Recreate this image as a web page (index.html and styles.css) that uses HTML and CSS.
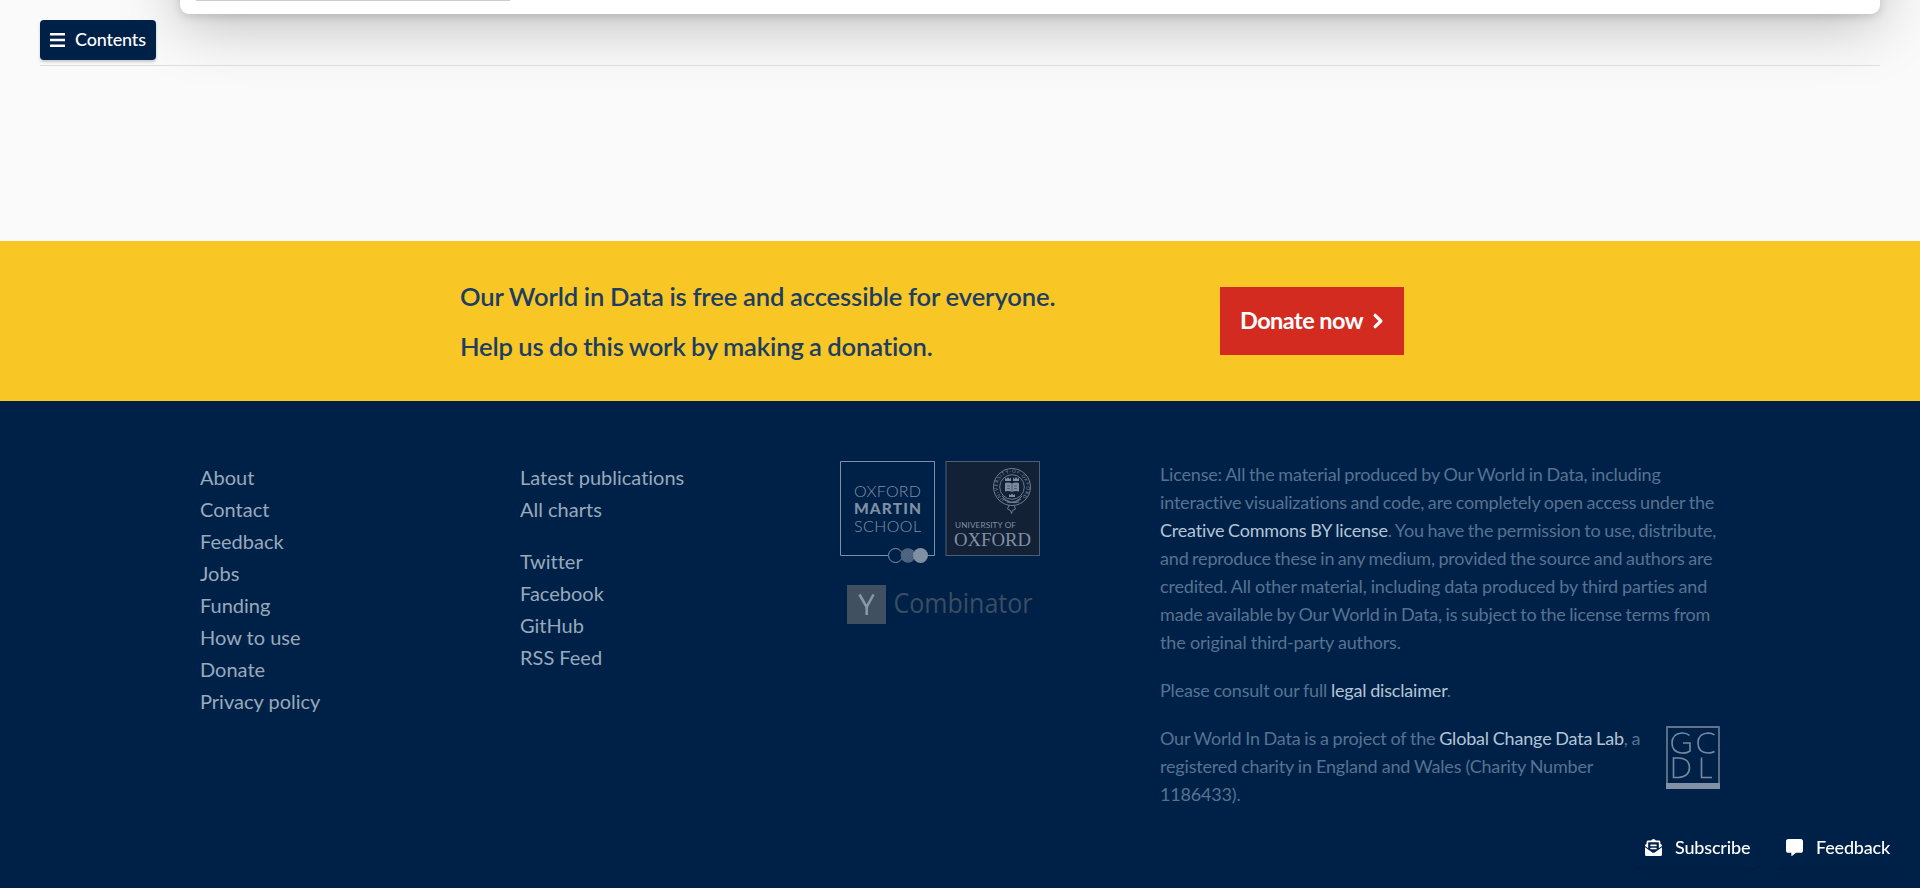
FILE: index.html
```html
<!DOCTYPE html>
<html lang="en">
<head>
<meta charset="utf-8">
<title>Our World in Data</title>
<link rel="stylesheet" href="styles.css">
</head>
<body>
<main class="article-end">
  <div class="card"><div class="card-rule"></div></div>
  <button class="contents-toggle">
    <svg class="bars" viewBox="0 0 15 14"><path d="M0 0h15v2.600H0zM0 5.700h15v2.600H0zM0 11.400h15v2.600H0z"/></svg>
    <span>Contents</span>
  </button>
</main>
<section class="donate">
  <div class="donate-text">
    <p class="donate-line">Our World in Data is free and accessible for everyone.</p>
    <p class="donate-line">Help us do this work by making a donation.</p>
  </div>
  <a class="donate-button"><span>Donate now</span>
    <svg class="chevron" viewBox="0 0 10 14"><path d="M2.500 2l5 5-5 5"/></svg>
  </a>
</section>
<footer class="footer">
  <div class="footer-grid">
    <ul class="links">
      <li>About</li><li>Contact</li><li>Feedback</li><li>Jobs</li><li>Funding</li><li>How to use</li><li>Donate</li><li>Privacy policy</li>
    </ul>
    <div class="link-groups">
      <ul class="links"><li>Latest publications</li><li>All charts</li></ul>
      <ul class="links"><li>Twitter</li><li>Facebook</li><li>GitHub</li><li>RSS Feed</li></ul>
    </div>
    <div class="logos">
      <svg class="logo-row" viewBox="0 0 200 104">
        <defs>
          <pattern id="hatch" width="2" height="2" patternUnits="userSpaceOnUse" patternTransform="rotate(45)"><rect width="1.1" height="2" fill="#8090a4"/></pattern>
          <path id="ring" d="M164.500 38.200A14.300 14.300 0 1 1 179.500 38.200"/>
        </defs>
        <path d="M48 94.500H.5V.5h94v94H88" fill="none" stroke="#8090a4"/>
        <g class="martin">
          <text x="14" y="35.500" textLength="67">OXFORD</text>
          <text class="martin-bold" x="14" y="53" textLength="67">MARTIN</text>
          <text x="14" y="71" textLength="67">SCHOOL</text>
        </g>
        <circle cx="55.500" cy="94.500" r="7" fill="none" stroke="#8090a4"/>
        <circle cx="68" cy="94.500" r="7.300" fill="#405977"/><circle cx="68" cy="94.500" r="7.300" fill="url(#hatch)" opacity=".35"/>
        <circle cx="80.500" cy="94.500" r="7.500" fill="#8090a4"/>
        <rect x="106" y=".5" width="93.500" height="94" fill="#122136" stroke="#4d5f78"/>
        <g fill="none" stroke="#74849a">
          <circle cx="172" cy="26" r="18.500" stroke-width=".9"/>
          <circle cx="172" cy="26" r="12.300" stroke-width=".9"/>
          <path d="M163 38q9 7 18 0M162 35q8 9 17 6M182 35q-6 8-15 6M169 44l-1.500 4 3 1.500 1 3 1-3 3-1.500-1.500-4" stroke-width=".9"/>
        </g>
        <text class="crest-text"><textPath href="#ring" textLength="70">UNIVERSITY·OF·OXFORD</textPath></text>
        <path d="M165 22q3.500-1 7 .5 3.500-1.500 7-.5v8.500q-3.500-1-7 .5-3.500-1.500-7-.5z" fill="#7c8ca1"/>
        <path d="M172 22.500V31M167 25h3M167 27.500h3M174 25h3M174 27.500h3" stroke="#35465d" stroke-width=".7"/>
        <path d="M165 16.500l1.500 1.500 1.500-2 1.500 2 1.500-1.500v3.500h-6zM173 16.500l1.500 1.500 1.500-2 1.500 2 1.500-1.500v3.500h-6zM169 33l1.500 1.300 1.500-1.800 1.500 1.800L175 33v3h-6z" fill="#7c8ca1"/>
        <text class="univ" x="115" y="67" textLength="61">UNIVERSITY OF</text>
        <text class="oxford" x="114" y="84.500" textLength="77" lengthAdjust="spacingAndGlyphs">OXFORD</text>
      </svg>
      <svg class="yc" viewBox="0 0 200 50">
        <rect x="7" y="5" width="39" height="39" fill="#405061"/>
        <path d="M19.500 14.500l7.200 12.500V35M33.500 14.500L26.700 27" fill="none" stroke="#8998a8" stroke-width="2.600"/>
        <text class="yc-text" x="53.500" y="32.500" textLength="139" lengthAdjust="spacingAndGlyphs">Combinator</text>
      </svg>
    </div>
    <div class="legal">
      <p><span class="snug">License: All the material produced by Our World in Data, including</span><br><span class="tight">interactive visualizations and code, are completely open access under the</span><br><span class="tight"><a>Creative Commons BY license</a>. You have the permission to use, distribute,</span><br><span class="tighter">and reproduce these in any medium, provided the source and authors are</span><br><span class="loose">credited. All other material, including data produced by third parties and</span><br><span class="tight">made available by Our World in Data, is subject to the license terms from</span><br>the original third-party authors.</p>
      <p><span class="snug">Please consult our full <a>legal disclaimer</a>.</span></p>
      <div class="project">
        <p><span class="snug">Our World In Data is a project of the <a>Global Change Data Lab</a>, a</span><br><span class="loose">registered charity in England and Wales (Charity Number</span><br>1186433).</p>
        <svg class="gcdl" viewBox="0 0 54 63">
          <path d="M1 1h52v60H1z" fill="none" stroke="#62748c" stroke-width="1.800"/>
          <path d="M0 57h54v6H0z" fill="#8291a5"/>
          <path d="M23.500 9.500Q20 6.500 15.500 7 6 8 6 17t9.500 10q5 .5 8.500-2v-8h-7M48.500 9Q46 7 42 7q-10 .5-10 10t10 10q4 0 6.500-1.500M7.500 32v19.500h5q11-1 11-10t-11-9.500zM35.500 31.500v20H46" fill="none" stroke="#7788a0" stroke-width="1.600"/>
        </svg>
      </div>
    </div>
  </div>
</footer>
<div class="tools">
  <button class="tool">
    <svg class="tool-icon" viewBox="0 0 512 512"><path d="M176 216h160c8.840 0 16-7.160 16-16v-16c0-8.840-7.160-16-16-16H176c-8.840 0-16 7.160-16 16v16c0 8.840 7.160 16 16 16zm-16 80c0 8.840 7.160 16 16 16h160c8.840 0 16-7.160 16-16v-16c0-8.840-7.160-16-16-16H176c-8.840 0-16 7.160-16 16v16zm96 121.130c-16.420 0-32.840-5.060-46.860-15.190L0 250.860V464c0 26.510 21.490 48 48 48h416c26.510 0 48-21.490 48-48V250.860L302.860 401.940c-14.020 10.120-30.440 15.190-46.860 15.190zm237.610-254.180c-8.850-6.940-17.240-13.470-29.610-22.810V96c0-26.510-21.490-48-48-48h-77.550c-3.040-2.200-5.870-4.260-9.040-6.560C312.600 29.170 279.200-.35 256 0c-23.200-.35-56.590 29.170-73.410 41.440-3.170 2.300-6 4.360-9.040 6.560H96c-26.510 0-48 21.490-48 48v44.140c-12.370 9.330-20.760 15.870-29.610 22.810A47.995 47.995 0 0 0 0 200.720v10.650l96 69.350V96h320v184.720l96-69.350v-10.650c0-14.740-6.780-28.670-18.390-37.770z"/></svg>
    <span>Subscribe</span>
  </button>
  <button class="tool">
    <svg class="tool-icon" viewBox="0 0 512 512"><path d="M448 0H64C29 0 0 29 0 64v288c0 35 29 64 64 64h96v84c0 10 11 15 19 10l125-94h144c35 0 64-29 64-64V64c0-35-29-64-64-64z"/></svg>
    <span>Feedback</span>
  </button>
</div>
</body>
</html>
```
FILE: styles.css
```css
* { box-sizing: border-box; }
body { margin: 0; font-family: Lato, "Liberation Sans", sans-serif; font-variant-ligatures: none; background: #002147; height: 888px; overflow: hidden; }
p, ul { margin: 0; padding: 0; }
ul { list-style: none; }
button { border: 0; font-family: inherit; }
svg { overflow: visible; }

.article-end { height: 241px; background: #fafafa; padding: 0 40px; overflow: hidden; }
.card { display: flex; align-items: flex-end; height: 400px; margin: -386px 0 0 140px; padding: 0 16px 13px; background: #fff; border-radius: 9px; box-shadow: 0 3px 9px rgba(0,0,0,.13), 0 10px 60px rgba(0,0,0,.25); }
.card-rule { width: 314px; height: 1px; background: #ccc; }
.article-end::after { content: ""; display: block; height: 1px; margin-top: 5px; background: #ddd; }
.contents-toggle { position: relative; display: flex; align-items: center; gap: 10px; width: 116px; height: 40px; margin-top: 6px; padding: 0 10px 1px; border-radius: 4px; background: #002147; color: #fff; font-size: 18px; font-weight: 500; letter-spacing: -.01em; box-shadow: 0 2px 3px rgba(0,0,0,.2); white-space: nowrap; }
.contents-toggle span, .tool span { margin-top: -2px; }
.bars { flex: none; width: 15px; height: 14px; fill: #fff; }

.donate { height: 160px; background: #f8c725; padding: 46px 0 0 460px; display: flex; align-items: flex-start; }
.donate-text { width: 760px; color: #1d3d63; font-size: 25.6px; font-weight: 600; line-height: 30px; margin-top: -6px; letter-spacing: -.12px; word-spacing: -.5px; }
.donate-line + .donate-line { margin-top: 20px; letter-spacing: -.15px; word-spacing: -.8px; }
.donate-button { width: 184px; height: 68px; padding: 0 20px 2px 20px; display: flex; align-items: center; justify-content: space-between; background: #d42b21; color: #fff; font-size: 23.5px; font-weight: 700; letter-spacing: -.55px; white-space: nowrap; }
.chevron { width: 12px; height: 16px; margin-top: 1px; fill: none; stroke: #fff; stroke-width: 2.800; stroke-linecap: round; stroke-linejoin: round; }

.footer { padding: 60px 200px 0; }
.footer-grid { display: grid; grid-template-columns: 320px 320px 320px 560px; }
.links { font-size: 20px; line-height: 32px; color: #98a9bd; }
.link-groups { display: flex; flex-direction: column; gap: 20px; }
.logos { width: 200px; display: flex; flex-direction: column; gap: 15px; }
.logo-row { width: 200px; height: 104px; }
.yc { width: 200px; height: 50px; }
.martin { font-family: Lato, sans-serif; font-size: 16px; font-weight: 300; fill: #8090a4; }
.martin-bold { font-weight: 900; font-size: 15.5px; }
.crest-text { font-size: 4.6px; fill: #8292a6; }
.univ { font-size: 8.2px; fill: #8090a4; }
.oxford { font-family: "Liberation Serif", serif; font-size: 18.5px; fill: #8090a4; }
.yc-text { font-family: "Open Sans", sans-serif; font-size: 27px; fill: #3a4d63; }

.legal { margin-top: -1px; font-size: 18px; line-height: 28px; letter-spacing: -.01em; color: #577291; white-space: nowrap; }
.legal p + p, .project { margin-top: 20px; }
.legal a { color: #b5c5d8; }
.snug { word-spacing: -.6px; }
.tight { word-spacing: -.75px; }
.tighter { word-spacing: -.85px; }
.loose { word-spacing: -.3px; }
.project { display: flex; justify-content: space-between; }
.gcdl { width: 54px; height: 63px; margin-top: 2px; }

.tools { position: fixed; right: 20px; bottom: 20px; display: flex; gap: 19px; }
.tool { display: flex; align-items: center; gap: 13px; width: 122px; height: 40px; padding: 0 0 1px 8px; background: #002147; color: #fff; font-size: 18px; font-weight: 500; letter-spacing: -.01em; border-radius: 4px; box-shadow: 0 2px 2px rgba(0,0,0,.12); }
.tool-icon { flex: none; width: 17px; height: 17px; fill: #fff; }
```
